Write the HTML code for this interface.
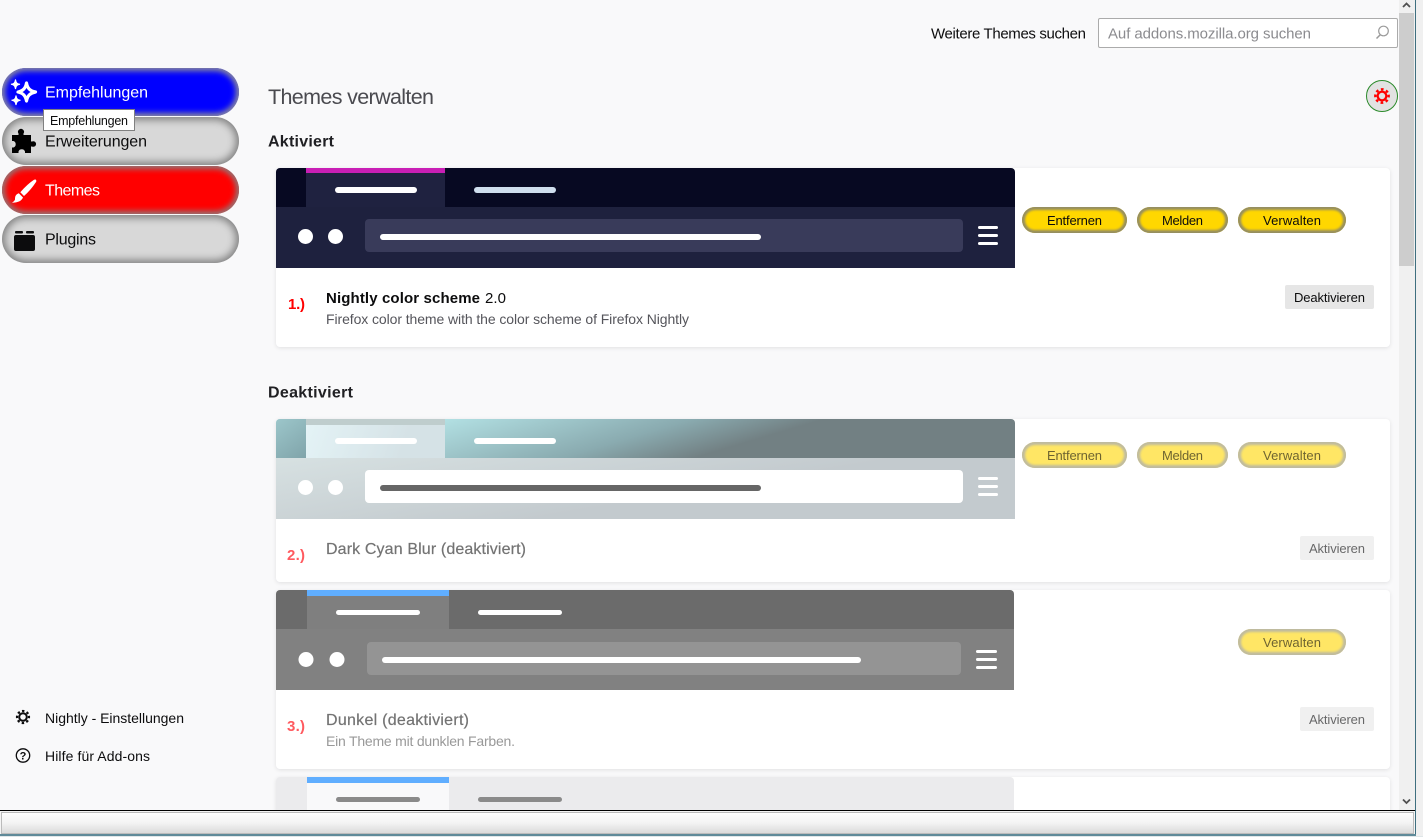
<!DOCTYPE html>
<html lang="de">
<head>
<meta charset="utf-8">
<title>Themes verwalten</title>
<style>
html,body{margin:0;padding:0;width:1423px;height:837px;overflow:hidden;background:#f0f0f0;font-family:"Liberation Sans",sans-serif}
.a{position:absolute;box-sizing:border-box}
.pill{left:2px;width:237px;height:48px;border-radius:24px;box-shadow:inset 0 0 8px 3px #808080}
.y{height:26px;border-radius:13px;background:#ffd700;box-shadow:inset 0 0 2px 3px #958e62}
.d{opacity:.6}
.card{left:276px;width:1114px;background:#fff;border-radius:4px;box-shadow:0 1px 4px rgba(12,12,13,.1)}
svg{position:absolute;left:0;top:0}
text{font-family:"Liberation Sans",sans-serif;fill:#0c0c0d}
.s16{font-size:16px}.s15{font-size:15px}.s14{font-size:14px}.s13{font-size:13px}
.b{font-weight:bold}
</style>
</head>
<body>
<div class="a" style="left:0;top:0;width:1399px;height:810px;background:#f9f9fa"></div>

<div class="a" style="left:1098px;top:18px;width:300px;height:30px;background:#fff;border:1px solid #ababab;border-radius:2px"></div>
<div class="a" style="left:1366px;top:80px;width:32px;height:32px;border-radius:50%;background:#e2e2e2;border:1px solid #2a8a2a"></div>

<div class="a pill" style="top:68px;background:#0000ff;box-shadow:inset 0 0 6px 3px #8c8c9c"></div>
<div class="a pill" style="top:117px;background:#d8d8d8"></div>
<div class="a pill" style="top:166px;background:#ff0000;box-shadow:inset 0 0 6px 3px #907878"></div>
<div class="a pill" style="top:215px;background:#d8d8d8"></div>
<div class="a" style="left:43px;top:109px;width:92px;height:22px;background:#fff;border:1px solid #808080"></div>

<div class="a card" style="top:168px;height:179px"></div>
<div class="a card" style="top:419px;height:163px"></div>
<div class="a card" style="top:590px;height:179px"></div>
<div class="a card" style="top:777px;height:60px"></div>

<div class="a y" style="left:1022px;top:207px;width:105px"></div>
<div class="a y" style="left:1137px;top:207px;width:91px"></div>
<div class="a y" style="left:1238px;top:207px;width:108px"></div>
<div class="a y d" style="left:1022px;top:442px;width:105px"></div>
<div class="a y d" style="left:1137px;top:442px;width:91px"></div>
<div class="a y d" style="left:1238px;top:442px;width:108px"></div>
<div class="a y d" style="left:1238px;top:629px;width:108px"></div>

<div class="a" style="left:1285px;top:285px;width:89px;height:24px;background:#e6e6e6;border-radius:2px"></div>
<div class="a" style="left:1300px;top:536px;width:74px;height:24px;background:#f0f0f0;border-radius:2px"></div>
<div class="a" style="left:1300px;top:707px;width:74px;height:24px;background:#f0f0f0;border-radius:2px"></div>

<svg width="1423" height="837" viewBox="0 0 1423 837" xmlns="http://www.w3.org/2000/svg">
<defs>
<linearGradient id="g1" gradientUnits="userSpaceOnUse" x1="276" y1="419" x2="306" y2="458"><stop offset="0" stop-color="#9cc6ca"/><stop offset="1" stop-color="#80a4aa"/></linearGradient>
<linearGradient id="g2" gradientUnits="userSpaceOnUse" x1="445" y1="419" x2="476" y2="523"><stop offset="0" stop-color="#b2e0e3"/><stop offset=".65" stop-color="#8aabb0"/><stop offset="1" stop-color="#728083"/></linearGradient>
<linearGradient id="g3" gradientUnits="userSpaceOnUse" x1="306" y1="425" x2="400" y2="458"><stop offset="0" stop-color="#e4f3f6"/><stop offset="1" stop-color="#d5e2e6"/></linearGradient>
<linearGradient id="g4" gradientUnits="userSpaceOnUse" x1="300" y1="458" x2="316" y2="555"><stop offset="0" stop-color="#d6e0e1"/><stop offset="1" stop-color="#c3cace"/></linearGradient>
<linearGradient id="g5" x1="0" y1="0" x2="0" y2="1"><stop offset="0" stop-color="#fff"/><stop offset=".5" stop-color="#f3f3f3"/><stop offset="1" stop-color="#d9d9d9"/></linearGradient>
</defs>

<!-- card 1 preview -->
<path d="M276 207V172a4 4 0 0 1 4-4H1011a4 4 0 0 1 4 4V207Z" fill="#070922"/>
<rect x="276" y="207" width="739" height="61" fill="#1e213e"/>
<rect x="306" y="168" width="139" height="39" fill="#1f2240"/>
<rect x="306" y="168" width="139" height="5" fill="#c91fb5"/>
<rect x="335" y="187" width="82" height="6" rx="3" fill="#fff"/>
<rect x="474" y="187" width="82" height="6" rx="3" fill="#cfdeee"/>
<circle cx="305.500" cy="236.500" r="7.500" fill="#fff"/>
<circle cx="335.500" cy="236.500" r="7.500" fill="#fff"/>
<rect x="365" y="219" width="598" height="33" rx="4" fill="#393b5a"/>
<rect x="380" y="234" width="381" height="6" rx="3" fill="#fff"/>
<path d="M979.500 227.500H996.500M979.500 235.500H996.500M979.500 243.500H996.500" stroke="#fff" stroke-width="3" stroke-linecap="round"/>

<!-- card 2 preview -->
<path d="M276 458V423a4 4 0 0 1 4-4H1011a4 4 0 0 1 4 4V458Z" fill="url(#g2)"/>
<path d="M276 458V423a4 4 0 0 1 4-4H306V458Z" fill="url(#g1)"/>
<rect x="276" y="458" width="739" height="61" fill="url(#g4)"/>
<rect x="306" y="419" width="139" height="6" fill="#bfcdcd"/>
<rect x="306" y="425" width="139" height="33" fill="url(#g3)"/>
<rect x="335" y="438" width="82" height="6" rx="3" fill="#fff"/>
<rect x="474" y="438" width="82" height="6" rx="3" fill="#fff"/>
<circle cx="305.500" cy="487.500" r="7.500" fill="#fff"/>
<circle cx="335.500" cy="487.500" r="7.500" fill="#fff"/>
<rect x="365" y="470" width="598" height="33" rx="4" fill="#fff"/>
<rect x="380" y="485" width="381" height="6" rx="3" fill="#666"/>
<path d="M979.500 478.500H996.500M979.500 486.500H996.500M979.500 494.500H996.500" stroke="#fff" stroke-width="3" stroke-linecap="round"/>

<!-- card 3 preview -->
<path d="M276 629V594a4 4 0 0 1 4-4H1010a4 4 0 0 1 4 4V629Z" fill="#6b6b6b"/>
<rect x="276" y="629" width="738" height="61" fill="#818181"/>
<rect x="307" y="590" width="142" height="39" fill="#7f7f7f"/>
<rect x="307" y="590" width="142" height="6" fill="#60aeff"/>
<rect x="336" y="610" width="84" height="5" rx="2.500" fill="#fff"/>
<rect x="478" y="610" width="84" height="5" rx="2.500" fill="#fff"/>
<circle cx="306" cy="659.500" r="7.500" fill="#fff"/>
<circle cx="337" cy="659.500" r="7.500" fill="#fff"/>
<rect x="367" y="642" width="594" height="33" rx="4" fill="#949494"/>
<rect x="382" y="657" width="479" height="6" rx="3" fill="#fff"/>
<path d="M977.500 651.500H995.500M977.500 659.500H995.500M977.500 667.500H995.500" stroke="#fff" stroke-width="3" stroke-linecap="round"/>

<!-- card 4 preview -->
<path d="M276 837V781a4 4 0 0 1 4-4H1010a4 4 0 0 1 4 4V837Z" fill="#ebebed"/>
<rect x="307" y="777" width="142" height="60" fill="#f9f9fa"/>
<rect x="307" y="777" width="142" height="6" fill="#60aeff"/>
<rect x="336" y="797" width="84" height="5" rx="2.500" fill="#8a8a8a"/>
<rect x="478" y="797" width="84" height="5" rx="2.500" fill="#8a8a8a"/>

<!-- top -->
<text x="931" y="38.500" class="s15" textLength="155" lengthAdjust="spacing">Weitere Themes suchen</text>
<text x="1108" y="38.500" class="s15" style="fill:#8b8b8f" textLength="203" lengthAdjust="spacing">Auf addons.mozilla.org suchen</text>
<circle cx="1383.500" cy="31" r="4.800" fill="none" stroke="#9a9a9a" stroke-width="1.200"/>
<path d="M1380 35L1376.500 38.500" stroke="#9a9a9a" stroke-width="1.500"/>
<text x="268" y="104" style="font-size:21.500px;fill:#4a4a4f" textLength="166" lengthAdjust="spacing">Themes verwalten</text>
<text x="268" y="146.500" class="s16 b" style="fill:#202023" textLength="66" lengthAdjust="spacing">Aktiviert</text>
<text x="268" y="397.500" class="s16 b" style="fill:#202023" textLength="85" lengthAdjust="spacing">Deaktiviert</text>

<!-- red gear -->
<g fill="none" stroke="#ff0000">
<circle cx="1382" cy="96" r="4.300" stroke-width="2.200"/>
<circle cx="1382" cy="96" r="6.700" stroke-width="2.400" stroke-dasharray="2.630 2.630" transform="rotate(-11 1382 96)"/>
</g>

<!-- sidebar icons -->
<path d="M26.500 83C27.500 88.500 30 90.800 35.500 92C30 93.200 27.500 95.500 26.500 101C25.500 95.500 23 93.200 18 92C23 90.800 25.500 88.500 26.500 83Z" fill="none" stroke="#fff" stroke-width="3.200" stroke-linejoin="round"/>
<path d="M15.500 79.500C16 82.800 17 83.800 20 84.300C17 84.800 16 85.800 15.500 89C15 85.800 14 84.800 11 84.300C14 83.800 15 82.800 15.500 79.500Z" fill="#fff" stroke="#fff" stroke-width="1"/>
<path d="M16 95.500C16.500 98.800 17.500 99.800 20.500 100.300C17.500 100.800 16.500 101.800 16 105C15.500 101.800 14.500 100.800 11.500 100.300C14.500 99.800 15.500 98.800 16 95.500Z" fill="#fff" stroke="#fff" stroke-width="1"/>
<path d="M12 135H18.500V133.500A3 3 0 1 1 23.500 133.500V135H31V141.500H32A2.800 2.800 0 1 1 32 146.500H31V153H25V151.500A3.500 3.500 0 0 0 18.500 151.500V153H12V147.500H13.500A3.500 3.500 0 0 0 13.500 141H12Z" fill="#000"/>
<path d="M34 179.800Q36.800 178.800 36.200 181.800Q30.500 190.500 24 196L20.300 192.300Q27 184.500 34 179.800Z" fill="#fff"/>
<path d="M18.800 193.300L23 197.500Q21 202.500 12 202.800Q15.500 200.500 15 198.300Q15.200 194.300 18.800 193.300Z" fill="#fff"/>
<rect x="14" y="235" width="21" height="16" rx="2" fill="#0c0c0d"/>
<rect x="15" y="231" width="8" height="2.500" rx="1" fill="#0c0c0d"/>
<rect x="26" y="231" width="8" height="2.500" rx="1" fill="#0c0c0d"/>

<text x="45" y="97.500" class="s16" style="fill:#fff" textLength="103" lengthAdjust="spacing">Empfehlungen</text>
<text x="45" y="146.500" class="s16" textLength="102" lengthAdjust="spacing">Erweiterungen</text>
<text x="45" y="195.500" class="s16" style="fill:#fff" textLength="55" lengthAdjust="spacing">Themes</text>
<text x="45" y="244.500" class="s16" textLength="51" lengthAdjust="spacing">Plugins</text>
<text x="50" y="125" style="font-size:12.500px" textLength="78" lengthAdjust="spacing">Empfehlungen</text>

<!-- bottom sidebar -->
<g fill="none" stroke="#0c0c0d">
<circle cx="23" cy="717" r="3.800" stroke-width="2"/>
<circle cx="23" cy="717" r="6" stroke-width="2.200" stroke-dasharray="2.360 2.350" transform="rotate(-11 23 717)"/>
<circle cx="23" cy="755.500" r="6.700" stroke-width="1.300"/>
</g>
<text x="23" y="759.500" text-anchor="middle" class="b" style="font-size:11px">?</text>
<text x="45" y="723" class="s14" textLength="139" lengthAdjust="spacing">Nightly - Einstellungen</text>
<text x="45" y="761" class="s14" textLength="105" lengthAdjust="spacing">Hilfe für Add-ons</text>

<!-- card 1 text -->
<text x="288" y="309" class="s15 b" style="fill:#ff0000" textLength="17" lengthAdjust="spacing">1.)</text>
<text x="326" y="303" class="s15 b" textLength="154" lengthAdjust="spacing">Nightly color scheme</text>
<text x="485" y="303" class="s15" textLength="21" lengthAdjust="spacing">2.0</text>
<text x="326" y="324" class="s14" style="fill:#55555b" textLength="363" lengthAdjust="spacing">Firefox color theme with the color scheme of Firefox Nightly</text>
<text x="1047" y="225" class="s13" textLength="55" lengthAdjust="spacing">Entfernen</text>
<text x="1162" y="225" class="s13" textLength="41" lengthAdjust="spacing">Melden</text>
<text x="1263" y="225" class="s13" textLength="58" lengthAdjust="spacing">Verwalten</text>
<text x="1294" y="302" class="s13" textLength="71" lengthAdjust="spacing">Deaktivieren</text>

<!-- card 2 text -->
<text x="287" y="560" class="s15 b" style="fill:#ff5a5f" textLength="18" lengthAdjust="spacing">2.)</text>
<text x="326" y="554" class="s16" style="fill:#737373;stroke:#737373;stroke-width:.2" textLength="200" lengthAdjust="spacing">Dark Cyan Blur (deaktiviert)</text>
<g style="opacity:.6">
<text x="1047" y="460" class="s13" textLength="55" lengthAdjust="spacing">Entfernen</text>
<text x="1162" y="460" class="s13" textLength="41" lengthAdjust="spacing">Melden</text>
<text x="1263" y="460" class="s13" textLength="58" lengthAdjust="spacing">Verwalten</text>
<text x="1263" y="647" class="s13" textLength="58" lengthAdjust="spacing">Verwalten</text>
<text x="1309" y="553" class="s13" textLength="56" lengthAdjust="spacing">Aktivieren</text>
<text x="1309" y="724" class="s13" textLength="56" lengthAdjust="spacing">Aktivieren</text>
</g>

<!-- card 3 text -->
<text x="287" y="731" class="s15 b" style="fill:#ff5a5f" textLength="18" lengthAdjust="spacing">3.)</text>
<text x="326" y="725" class="s16" style="fill:#737373;stroke:#737373;stroke-width:.2" textLength="143" lengthAdjust="spacing">Dunkel (deaktiviert)</text>
<text x="326" y="746" class="s14" style="fill:#999" textLength="189" lengthAdjust="spacing">Ein Theme mit dunklen Farben.</text>

<!-- scrollbar -->
<rect x="1399" y="0" width="16" height="810" fill="#f0f0f0"/>
<rect x="1399" y="13" width="15" height="253" fill="#cdcdcd"/>
<path d="M1403 7L1406.500 3.500L1410 7" fill="none" stroke="#505050" stroke-width="1.800"/>
<path d="M1403 799.500L1406.500 803L1410 799.500" fill="none" stroke="#505050" stroke-width="1.800"/>
<rect x="1415" y="0" width="1" height="835" fill="#3f6f7f"/>

<!-- status bar -->
<rect x="0" y="810" width="1415" height="1" fill="#000"/>
<rect x="0" y="811" width="1415" height="24" fill="#f4f4f4"/>
<rect x="1.500" y="812.500" width="1412" height="21" fill="url(#g5)" stroke="#bbb"/>
<rect x="0" y="834" width="1416" height="2" fill="#5f8a99"/>
<rect x="0" y="836" width="1423" height="1" fill="#dfe6e8"/>
</svg>
</body>
</html>
